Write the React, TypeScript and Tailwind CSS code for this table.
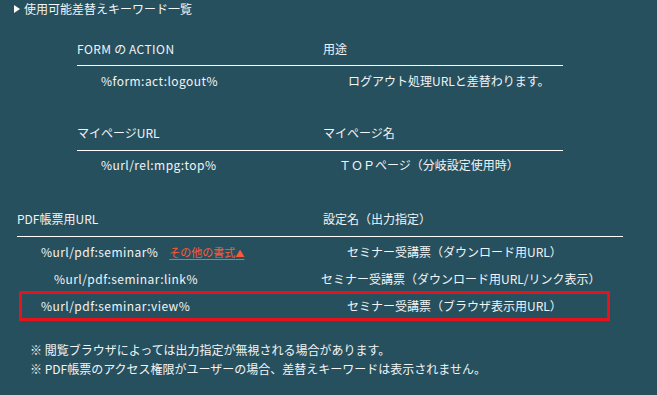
import React from "react";

const font = {
  fontFamily: '"Noto Sans CJK JP", "Noto Sans", sans-serif',
};

// latin-only keyword text, set slightly looser
function Kw({ children }: { children: React.ReactNode }) {
  return <span className="tracking-[0.45px]">{children}</span>;
}

export default function App() {
  return (
    <div
      className="w-[657px] h-[395px] bg-[#27505f] text-[#f2f4f5] text-[12px] leading-[18px] overflow-hidden"
      style={font}
    >
      {/* section title */}
      <div className="flex items-center h-[18px] pl-[14px]">
        <span className="w-0 h-0 border-y-[4px] border-y-transparent border-l-[6px] border-l-white mr-[4px]" />
        <span>使用可能差替えキーワード一覧</span>
      </div>

      {/* FORM action table */}
      <div className="ml-[77px] w-[486px] mt-[22px]">
        <div className="flex pb-[7px] border-b border-white">
          <div className="w-[246px]">
            <Kw>FORM</Kw> の <Kw>ACTION</Kw>
          </div>
          <div>用途</div>
        </div>
        <div className="flex pt-[6px]">
          <div className="w-[246px] pl-[24px]">
            <Kw>%form:act:logout%</Kw>
          </div>
          <div className="pl-[25px]">ログアウト処理URLと差替わります。</div>
        </div>
      </div>

      {/* my page table */}
      <div className="ml-[77px] w-[486px] mt-[34px]">
        <div className="flex pb-[8px] border-b border-white">
          <div className="w-[246px]">マイページURL</div>
          <div>マイページ名</div>
        </div>
        <div className="flex pt-[5px]">
          <div className="w-[246px] pl-[24px]">
            <Kw>%url/rel:mpg:top%</Kw>
          </div>
          <div className="pl-[16px]">ＴＯＰページ（分岐設定使用時）</div>
        </div>
      </div>

      {/* PDF form table */}
      <div className="ml-[17px] w-[606px] mt-[36px]">
        <div className="flex pb-[8px] border-b border-white">
          <div className="w-[306px]">PDF帳票用URL</div>
          <div>設定名（出力指定）</div>
        </div>
        <div className="flex pt-[6px] h-[33px]">
          <div className="w-[306px] pl-[24px] flex items-baseline">
            <Kw>%url/pdf:seminar%</Kw>
            <a className="ml-[11px] text-[11px] text-[#ff5a36] underline underline-offset-2 cursor-pointer">
              その他の書式<span className="text-[9px]">▲</span>
            </a>
          </div>
          <div className="pl-[24px]">セミナー受講票（ダウンロード用URL）</div>
        </div>
        <div className="flex h-[21px]">
          <div className="w-[304px] pl-[37px]">
            <Kw>%url/pdf:seminar:link%</Kw>
          </div>
          <div>セミナー受講票（ダウンロード用URL/リンク表示）</div>
        </div>
        <div className="ml-[2px] w-[591px] h-[30px] border-[3px] border-[#e5131b] flex items-center">
          <div className="w-[304px] pl-[19px]">
            <Kw>%url/pdf:seminar:view%</Kw>
          </div>
          <div className="pl-[21px]">セミナー受講票（ブラウザ表示用URL）</div>
        </div>
      </div>

      {/* notes */}
      <div className="ml-[30px] mt-[19px] leading-[19px]">
        <div>※ 閲覧ブラウザによっては出力指定が無視される場合があります。</div>
        <div>※ PDF帳票のアクセス権限がユーザーの場合、差替えキーワードは表示されません。</div>
      </div>
    </div>
  );
}
